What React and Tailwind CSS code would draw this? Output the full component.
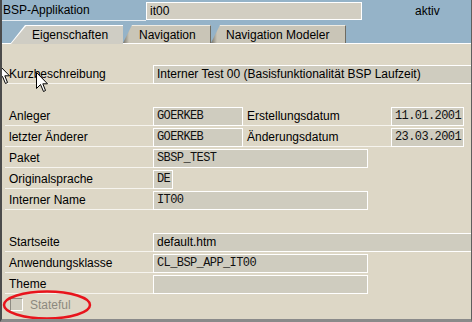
import React from "react";

const Label = ({ children, w = "w-[148px]" }) => (
  <div className={`${w} h-[19px] shrink-0 border-b border-[#f6f4ee] pl-[4px] leading-[18px] text-black whitespace-nowrap`}>
    {children}
  </div>
);

const Field = ({ children, w, mono = true, open = false }) => (
  <div
    className={`${w} h-[19px] shrink-0 border border-white ${open ? "border-r-0" : ""} bg-[#cfccbf] pl-[3px] whitespace-nowrap overflow-hidden ${
      mono
        ? "font-['Liberation_Mono',monospace] text-[12px] tracking-[-0.6px] leading-[17px] text-[#111]"
        : "text-[12px] leading-[17px] text-black"
    }`}
  >
    {children}
  </div>
);

const Row = ({ children }) => <div className="flex h-[21px]">{children}</div>;

const Cursor = ({ className }) => (
  <svg className={className} width="13" height="21" viewBox="0 0 13 21">
    <path d="M0.5 0.5 L0.5 16.5 L4.5 12.5 L7.5 19.5 L9.5 18.5 L6.8 11.8 L11.5 11.8 Z" fill="#fff" stroke="#000" strokeWidth="1" />
  </svg>
);

export default function App() {
  return (
    <div className="relative w-[472px] h-[322px] overflow-hidden bg-[#ddd7c6] border-l-2 border-l-[#4b4b4b] border-r border-r-[#5e5e5e] border-b-[3px] border-b-[#8a8a8a] font-['Liberation_Sans',Arial,sans-serif] text-[12px] text-black">
      {/* header */}
      <div className="flex h-[21px] bg-[#95b3c8]">
        <div className="w-[144px] h-[21px] border-b border-[#e6edf2] pl-px leading-[20px]">BSP-Applikation</div>
        <div className="mt-[2px] h-[18px] w-[216px] border border-white bg-[#d2cec2] pl-[3px] leading-[16px]">it00</div>
        <div className="pl-[53px] pt-[1px] leading-[20px]">aktiv</div>
      </div>
      {/* tabs */}
      <div className="flex items-end h-[23px] bg-[#95b3c8] border-b border-white pl-[8px]">
        <div className="relative z-10 -mb-px w-[113px] h-[19px] bg-white pt-px pl-px [clip-path:polygon(15px_0,100%_0,100%_100%,0_100%)]">
          <div className="h-full flex items-center pl-[21px] bg-[#cfcdc4] [clip-path:polygon(15px_0,100%_0,100%_100%,0_100%)]">
            Eigenschaften
          </div>
        </div>
        <div className="w-[88px] h-[18px] flex items-center pl-[16px] border-t border-t-[#eeebe2] border-r border-r-[#6f6c62] bg-[linear-gradient(to_right,#77746a,#c9c5b7_6px)] [clip-path:polygon(9px_0,100%_0,100%_100%,0_100%)]">
          Navigation
        </div>
        <div className="w-[135px] h-[18px] flex items-center pl-[15px] border-t border-t-[#eeebe2] border-r border-r-[#6f6c62] bg-[linear-gradient(to_right,#77746a,#c9c5b7_6px)] [clip-path:polygon(9px_0,100%_0,100%_100%,0_100%)]">
          Navigation Modeler
        </div>
      </div>
      {/* content */}
      <div className="pt-[21px] pl-[3px]">
        <Row>
          <Label>Kurzbeschreibung</Label>
          <Field w="flex-1" mono={false} open>Interner Test 00 (Basisfunktionalität BSP Laufzeit)</Field>
        </Row>
        <Row />
        <Row>
          <Label>Anleger</Label>
          <Field w="w-[90px]">GOERKEB</Field>
          <Label>Erstellungsdatum</Label>
          <Field w="w-[73px]">11.01.2001</Field>
        </Row>
        <Row>
          <Label>letzter Änderer</Label>
          <Field w="w-[90px]">GOERKEB</Field>
          <Label>Änderungsdatum</Label>
          <Field w="w-[73px]">23.03.2001</Field>
        </Row>
        <Row>
          <Label>Paket</Label>
          <Field w="w-[215px]">SBSP_TEST</Field>
        </Row>
        <Row>
          <Label>Originalsprache</Label>
          <Field w="w-[20px]">DE</Field>
        </Row>
        <Row>
          <Label>Interner Name</Label>
          <Field w="w-[215px]">IT00</Field>
        </Row>
        <Row />
        <Row>
          <Label>Startseite</Label>
          <Field w="flex-1" mono={false} open>default.htm</Field>
        </Row>
        <Row>
          <Label>Anwendungsklasse</Label>
          <Field w="w-[215px]">CL_BSP_APP_IT00</Field>
        </Row>
        <Row>
          <Label>Theme</Label>
          <Field w="w-[215px]"></Field>
        </Row>
        <div className="flex items-start h-[21px]">
          <div className="ml-[5px] mt-[2px] w-[13px] h-[13px] border border-t-[#8e8b82] border-l-[#8e8b82] border-b-white border-r-white bg-[#cfccbf]" />
          <div className="pl-[7px] leading-[19px] text-[#8c897e]">Stateful</div>
        </div>
      </div>

      {/* overlays */}
      <svg className="absolute left-0 top-[289px]" width="94" height="32" viewBox="0 0 94 32">
        <ellipse cx="45" cy="16" rx="43" ry="13.5" fill="none" stroke="#e8141c" strokeWidth="2.5" />
      </svg>
      <Cursor className="absolute left-[34px] top-[72px]" />
      <Cursor className="absolute left-[-4px] top-[64px]" />
    </div>
  );
}
